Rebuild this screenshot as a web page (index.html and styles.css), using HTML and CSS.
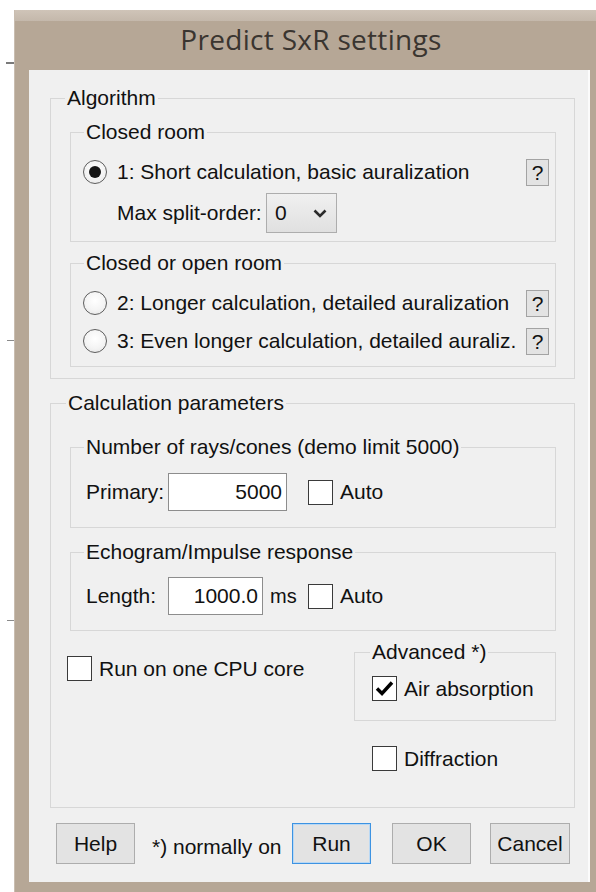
FILE: index.html
```html
<!DOCTYPE html>
<html lang="en">
<head>
<meta charset="utf-8">
<title>Predict SxR settings</title>
<link rel="stylesheet" href="styles.css">
</head>
<body>
<div class="window">
  <div class="titlebar">Predict SxR settings</div>
  <div class="client">

    <fieldset class="group g-top">
      <legend>Algorithm</legend>
      <div class="algo-body">

        <fieldset class="group">
          <legend>Closed room</legend>
          <div class="closed-body">
            <div class="opt">
              <span class="radio checked"></span>
              <span class="opt-text">1: Short calculation, basic auralization</span>
              <span class="qbtn">?</span>
            </div>
            <div class="split-row">
              <span class="split-label">Max split-order:</span>
              <span class="combo">
                <span class="combo-val">0</span>
                <svg class="chev" width="14" height="9" viewBox="0 0 14 9"><path d="M1.5 1.5 L7 7 L12.5 1.5" fill="none" stroke="#2b2b2b" stroke-width="2.6"/></svg>
              </span>
            </div>
          </div>
        </fieldset>

        <fieldset class="group g-open">
          <legend>Closed or open room</legend>
          <div class="open-body">
            <div class="opt">
              <span class="radio"></span>
              <span class="opt-text">2: Longer calculation, detailed auralization</span>
              <span class="qbtn">?</span>
            </div>
            <div class="opt opt-next">
              <span class="radio"></span>
              <span class="opt-text">3: Even longer calculation, detailed auraliz.</span>
              <span class="qbtn">?</span>
            </div>
          </div>
        </fieldset>

      </div>
    </fieldset>

    <fieldset class="group g-top g-calc">
      <legend>Calculation parameters</legend>
      <div class="calc-body">

        <fieldset class="group">
          <legend>Number of rays/cones (demo limit 5000)</legend>
          <div class="rays-body">
            <div class="field-row">
              <span class="field-label">Primary:</span>
              <span class="edit edit-primary">5000</span>
              <span class="check-item auto-primary"><span class="cb"></span><span>Auto</span></span>
            </div>
          </div>
        </fieldset>

        <fieldset class="group g-echo">
          <legend>Echogram/Impulse response</legend>
          <div class="echo-body">
            <div class="field-row">
              <span class="field-label">Length:</span>
              <span class="edit edit-length">1000.0</span>
              <span class="unit">ms</span>
              <span class="check-item"><span class="cb"></span><span>Auto</span></span>
            </div>
          </div>
        </fieldset>

        <div class="lower">
          <div class="lower-left">
            <span class="check-item"><span class="cb"></span><span>Run on one CPU core</span></span>
          </div>
          <div class="lower-right">
            <fieldset class="group g-adv">
              <legend>Advanced *)</legend>
              <div class="adv-body">
                <span class="check-item">
                  <span class="cb">
                    <svg width="19" height="17" viewBox="0 0 19 17"><path d="M2 8.5 L7 13.5 L17 2.5" fill="none" stroke="#000" stroke-width="3.4"/></svg>
                  </span>
                  <span>Air absorption</span>
                </span>
              </div>
            </fieldset>
            <span class="check-item diffraction"><span class="cb"></span><span>Diffraction</span></span>
          </div>
        </div>

      </div>
    </fieldset>

    <div class="buttons">
      <span class="btn btn-help">Help</span>
      <span class="note">*) normally on</span>
      <span class="btn btn-run">Run</span>
      <span class="btn btn-ok">OK</span>
      <span class="btn btn-cancel">Cancel</span>
    </div>

  </div>
</div>
</body>
</html>
```
FILE: styles.css
```css
* {
  box-sizing: border-box;
}

html,
body {
  margin: 0;
}

/* white desktop with a few ruler ticks peeking out at the left */
body {
  width: 596px;
  height: 892px;
  overflow: hidden;
  background-color: #fff;
  background-image:
    linear-gradient(#7a7a7a, #7a7a7a),
    linear-gradient(#8a8a8a, #8a8a8a),
    linear-gradient(#8a8a8a, #8a8a8a);
  background-repeat: no-repeat;
  background-size: 8px 2px, 7px 1px, 7px 1px;
  background-position: 6px 62px, 7px 340px, 7px 620px;
  font-family: "Liberation Sans", Arial, sans-serif;
  font-size: 21px;
  color: #111;
}

/* ---------- window frame ---------- */
.window {
  margin: 10px 0 0 14px;
  width: 582px;
  height: 882px;
  display: flex;
  flex-direction: column;
  background: #b6a796;
  border-left: 1px solid #c9bdb0;
}

.titlebar {
  height: 60px;
  flex: none;
  padding: 11px 0 0 11px;
  text-align: center;
  font-family: "Open Sans", "Noto Sans", sans-serif;
  font-size: 28px;
  letter-spacing: 0.3px;
  line-height: 36px;
  color: #3a3530;
  background: linear-gradient(#cfc4b8 0, #c4b8ab 11px, #b6a796 11px);
}

.client {
  flex: 1;
  margin: 0 6px 10px 14px;
  padding: 18px 15px 17px 21px;
  background: #f0f0f0;
  box-shadow: inset -2px 0 0 #fbfbfb;
  display: flex;
  flex-direction: column;
}

/* ---------- group boxes ---------- */
fieldset.group {
  margin: 0;
  padding: 0;
  min-width: 0;
  border: 1px solid #d7d7d7;
}

fieldset.group > legend {
  padding: 0 2px;
  margin-left: 13px;
  font-size: 21px;
  line-height: 20px;
  white-space: nowrap;
}

fieldset.g-top > legend {
  margin-left: 14px;
}

fieldset.g-calc {
  margin-top: 14px;
}

fieldset.g-calc > legend {
  margin-left: 15px;
}

.algo-body {
  padding: 14px 18px 11px 19px;
}

.closed-body {
  padding: 16px 6px 8px 12px;
}

fieldset.g-open {
  margin-top: 11px;
}

.open-body {
  padding: 16px 6px 11px 12px;
}

.calc-body {
  padding: 24px 18px 36px 19px;
}

.rays-body {
  padding: 16px 12px 16px 15px;
}

fieldset.g-echo {
  margin-top: 14px;
}

.echo-body {
  padding: 15px 12px 15px 15px;
}

/* ---------- option rows ---------- */
.opt {
  display: flex;
  align-items: center;
  height: 28px;
}

.opt-next {
  margin-top: 10px;
}

.opt-text {
  flex: 1;
  margin-left: 10px;
  white-space: nowrap;
}

.radio {
  flex: none;
  width: 24px;
  height: 24px;
  border-radius: 50%;
  border: 1px solid #5e5e5e;
  background: radial-gradient(circle at 50% 40%, #ffffff 0, #f4f4f4 55%, #e2e2e2 100%);
  display: grid;
  place-items: center;
}

.radio.checked::after {
  content: "";
  width: 12px;
  height: 12px;
  border-radius: 50%;
  background: #161616;
}

.qbtn {
  flex: none;
  width: 23px;
  height: 27px;
  border: 1px solid #a3a3a3;
  background: #e3e3e3;
  display: grid;
  place-items: center;
  font-size: 21px;
  line-height: 1;
}

.split-row {
  display: flex;
  align-items: center;
  margin-top: 7px;
  padding-left: 34px;
  height: 40px;
}

.split-label {
  width: 149px;
  white-space: nowrap;
}

.combo {
  width: 71px;
  height: 40px;
  border: 1px solid #adadad;
  background: linear-gradient(#f0f0f0, #e0e0e0);
  display: flex;
  align-items: center;
  justify-content: space-between;
  padding: 0 9px 0 8px;
}

/* ---------- edit fields ---------- */
.field-row {
  display: flex;
  align-items: center;
  height: 38px;
}

.field-label {
  width: 82px;
  flex: none;
  white-space: nowrap;
}

.edit {
  height: 38px;
  border: 1px solid #8d8d8d;
  background: #fff;
  display: flex;
  align-items: center;
  justify-content: flex-end;
  padding-right: 4px;
}

.edit-primary {
  width: 119px;
}

.edit-length {
  width: 95px;
}

.unit {
  width: 45px;
  padding-left: 7px;
  font-size: 20px;
}

.auto-primary {
  margin-left: 21px;
}

/* ---------- check boxes ---------- */
.check-item {
  display: flex;
  align-items: center;
  gap: 7px;
  white-space: nowrap;
}

.cb {
  flex: none;
  width: 25px;
  height: 25px;
  border: 1px solid #3a3a3a;
  background: #fff;
  display: grid;
  place-items: center;
}

.lower {
  display: flex;
}

.lower-left {
  flex: 1;
  padding-top: 25px;
  margin-left: -3px;
}

.lower-right {
  width: 202px;
  flex: none;
  padding-top: 11px;
}

fieldset.g-adv > legend {
  margin-left: 15px;
}

.adv-body {
  padding: 14px 0 19px 17px;
}

.diffraction {
  margin-top: 25px;
  margin-left: 18px;
}

/* ---------- bottom buttons ---------- */
.buttons {
  display: flex;
  align-items: center;
  margin-top: 15px;
  margin-left: 6px;
}

.btn {
  height: 41px;
  border: 1px solid #adadad;
  background: #e3e3e3;
  display: grid;
  place-items: center;
  flex: none;
}

.btn-help {
  width: 79px;
}

.note {
  width: 157px;
  padding: 6px 0 0 17px;
  white-space: nowrap;
}

.btn-run {
  width: 79px;
  border-color: #3d93e2;
  box-shadow: inset 0 0 0 1px #b9d8f4;
}

.btn-ok {
  width: 79px;
  margin-left: 21px;
}

.btn-cancel {
  width: 80px;
  margin-left: 19px;
}
```
